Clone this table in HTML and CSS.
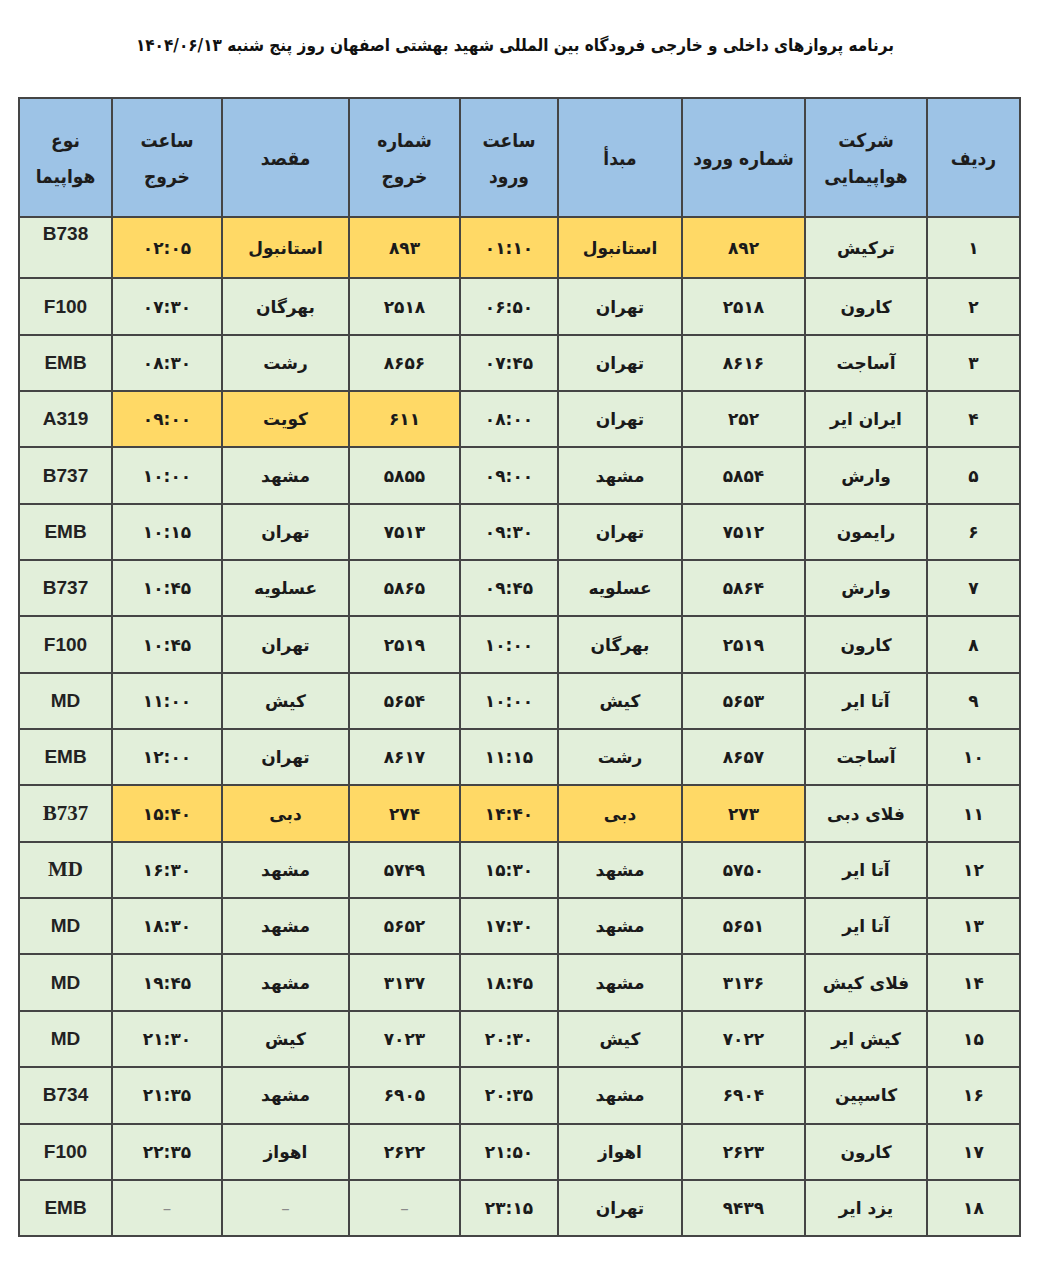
FILE: index.html
```html
<!DOCTYPE html>
<html lang="fa" dir="rtl">
<head>
<meta charset="utf-8">
<title>برنامه پروازها</title>
<link rel="stylesheet" href="styles.css">
</head>
<body>
<div class="page">
  <h1 class="title">برنامه پروازهای داخلی و خارجی فرودگاه بین المللی شهید بهشتی اصفهان روز پنج شنبه ۱۴۰۴/۰۶/۱۳</h1>
  <table class="flights">
    <colgroup>
      <col class="c-row"><col class="c-air"><col class="c-inno"><col class="c-from"><col class="c-intime">
      <col class="c-outno"><col class="c-to"><col class="c-outtime"><col class="c-type">
    </colgroup>
    <thead>
      <tr>
        <th>ردیف</th>
        <th>شرکت<br>هواپیمایی</th>
        <th>شماره ورود</th>
        <th>مبدأ</th>
        <th>ساعت<br>ورود</th>
        <th>شماره<br>خروج</th>
        <th>مقصد</th>
        <th>ساعت<br>خروج</th>
        <th>نوع<br>هواپیما</th>
      </tr>
    </thead>
    <tbody>
      <tr><td>۱</td><td>ترکیش</td><td class="hl">۸۹۲</td><td class="hl">استانبول</td><td class="hl">۰۱:۱۰</td><td class="hl">۸۹۳</td><td class="hl">استانبول</td><td class="hl">۰۲:۰۵</td><td class="type top">B738</td></tr>
      <tr><td>۲</td><td>کارون</td><td>۲۵۱۸</td><td>تهران</td><td>۰۶:۵۰</td><td>۲۵۱۸</td><td>بهرگان</td><td>۰۷:۳۰</td><td class="type">F100</td></tr>
      <tr><td>۳</td><td>آساجت</td><td>۸۶۱۶</td><td>تهران</td><td>۰۷:۴۵</td><td>۸۶۵۶</td><td>رشت</td><td>۰۸:۳۰</td><td class="type">EMB</td></tr>
      <tr><td>۴</td><td>ایران ایر</td><td>۲۵۲</td><td>تهران</td><td>۰۸:۰۰</td><td class="hl">۶۱۱</td><td class="hl">کویت</td><td class="hl">۰۹:۰۰</td><td class="type">A319</td></tr>
      <tr><td>۵</td><td>وارش</td><td>۵۸۵۴</td><td>مشهد</td><td>۰۹:۰۰</td><td>۵۸۵۵</td><td>مشهد</td><td>۱۰:۰۰</td><td class="type">B737</td></tr>
      <tr><td>۶</td><td>رایمون</td><td>۷۵۱۲</td><td>تهران</td><td>۰۹:۳۰</td><td>۷۵۱۳</td><td>تهران</td><td>۱۰:۱۵</td><td class="type">EMB</td></tr>
      <tr><td>۷</td><td>وارش</td><td>۵۸۶۴</td><td>عسلویه</td><td>۰۹:۴۵</td><td>۵۸۶۵</td><td>عسلویه</td><td>۱۰:۴۵</td><td class="type">B737</td></tr>
      <tr><td>۸</td><td>کارون</td><td>۲۵۱۹</td><td>بهرگان</td><td>۱۰:۰۰</td><td>۲۵۱۹</td><td>تهران</td><td>۱۰:۴۵</td><td class="type">F100</td></tr>
      <tr><td>۹</td><td>آتا ایر</td><td>۵۶۵۳</td><td>کیش</td><td>۱۰:۰۰</td><td>۵۶۵۴</td><td>کیش</td><td>۱۱:۰۰</td><td class="type">MD</td></tr>
      <tr><td>۱۰</td><td>آساجت</td><td>۸۶۵۷</td><td>رشت</td><td>۱۱:۱۵</td><td>۸۶۱۷</td><td>تهران</td><td>۱۲:۰۰</td><td class="type">EMB</td></tr>
      <tr><td>۱۱</td><td>فلای دبی</td><td class="hl">۲۷۳</td><td class="hl">دبی</td><td class="hl">۱۴:۴۰</td><td class="hl">۲۷۴</td><td class="hl">دبی</td><td class="hl">۱۵:۴۰</td><td class="type serif">B737</td></tr>
      <tr><td>۱۲</td><td>آتا ایر</td><td>۵۷۵۰</td><td>مشهد</td><td>۱۵:۳۰</td><td>۵۷۴۹</td><td>مشهد</td><td>۱۶:۳۰</td><td class="type serif">MD</td></tr>
      <tr><td>۱۳</td><td>آتا ایر</td><td>۵۶۵۱</td><td>مشهد</td><td>۱۷:۳۰</td><td>۵۶۵۲</td><td>مشهد</td><td>۱۸:۳۰</td><td class="type">MD</td></tr>
      <tr><td>۱۴</td><td>فلای کیش</td><td>۳۱۳۶</td><td>مشهد</td><td>۱۸:۴۵</td><td>۳۱۳۷</td><td>مشهد</td><td>۱۹:۴۵</td><td class="type">MD</td></tr>
      <tr><td>۱۵</td><td>کیش ایر</td><td>۷۰۲۲</td><td>کیش</td><td>۲۰:۳۰</td><td>۷۰۲۳</td><td>کیش</td><td>۲۱:۳۰</td><td class="type">MD</td></tr>
      <tr><td>۱۶</td><td>کاسپین</td><td>۶۹۰۴</td><td>مشهد</td><td>۲۰:۳۵</td><td>۶۹۰۵</td><td>مشهد</td><td>۲۱:۳۵</td><td class="type">B734</td></tr>
      <tr><td>۱۷</td><td>کارون</td><td>۲۶۲۳</td><td>اهواز</td><td>۲۱:۵۰</td><td>۲۶۲۲</td><td>اهواز</td><td>۲۲:۳۵</td><td class="type">F100</td></tr>
      <tr><td>۱۸</td><td>یزد ایر</td><td>۹۴۳۹</td><td>تهران</td><td>۲۳:۱۵</td><td class="dash">–</td><td class="dash">–</td><td class="dash">–</td><td class="type">EMB</td></tr>
    </tbody>
  </table>
</div>
</body>
</html>
```
FILE: styles.css
```css
html, body {
  margin: 0;
  padding: 0;
  background: #ffffff;
}

body {
  font-family: "DejaVu Sans", "Noto Sans", sans-serif;
  color: #151515;
}

.page {
  width: 1042px;
  padding-top: 31px;
}

.title {
  margin: 0;
  height: 66px;
  text-align: center;
  font-family: "DejaVu Sans Condensed", "DejaVu Sans", sans-serif;
  font-stretch: condensed;
  font-size: 17px;
  font-weight: bold;
  line-height: 28px;
  padding-right: 12px;
  color: #111111;
}

.flights {
  margin-right: 21px;
  width: 1001px;
  table-layout: fixed;
  border-collapse: collapse;
  border: 2px solid #4a4a4a;
}

.c-row { width: 93px; }
.c-air { width: 122px; }
.c-inno { width: 123px; }
.c-from { width: 124px; }
.c-intime { width: 98px; }
.c-outno { width: 111px; }
.c-to { width: 127px; }
.c-outtime { width: 110px; }
.c-type { width: 93px; }

.flights th,
.flights td {
  border: 2px solid #454545;
  text-align: center;
  vertical-align: middle;
  padding: 0;
  font-weight: bold;
}

.flights th {
  background: #9dc3e6;
  height: 117px;
  font-family: "DejaVu Sans Condensed", "DejaVu Sans", sans-serif;
  font-stretch: condensed;
  font-size: 19px;
  line-height: 36px;
  color: #1d1d1d;
}

.flights td {
  background: #e2efda;
  height: 54.35px;
  font-size: 17px;
  color: #1a1a1a;
}

.flights td.hl {
  background: #ffd966;
}

.flights td.type {
  font-family: "Liberation Sans", Arial, sans-serif;
  font-size: 19px;
  color: #222222;
}

.flights td.type.top {
  vertical-align: top;
  padding-top: 5px;
}

.flights td.type.serif {
  font-family: "Liberation Serif", "Times New Roman", serif;
  font-size: 21px;
}

.flights td.dash {
  color: #8a8a8a;
  font-weight: normal;
}
```
